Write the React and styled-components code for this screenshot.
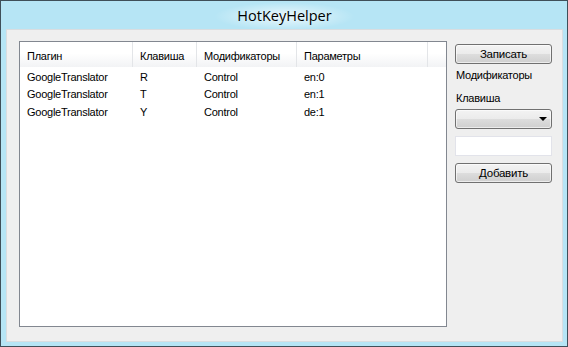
import React from "react";
import styled, { createGlobalStyle } from "styled-components";

const Global = createGlobalStyle`
  html, body { margin: 0; padding: 0; background: #6fa7c9; }
  body { font-family: "Liberation Sans", Arial, sans-serif; }
  * { box-sizing: border-box; }
`;

const Window = styled.div`
  width: 568px;
  height: 347px;
  border: 1px solid #3f4f59;
  background: #b6e5f5;
  display: flex;
  flex-direction: column;
  padding: 0 4px 4px 5px;
`;

const TitleBar = styled.div`
  height: 28px;
  display: flex;
  align-items: center;
  justify-content: center;
  background: radial-gradient(ellipse 70px 14px at 50% 55%, rgba(255,255,255,0.75), rgba(255,255,255,0) 100%);
  font-family: "Segoe UI", "Open Sans", "Liberation Sans", sans-serif;
  font-size: 14.5px;
  color: #000;
  padding-top: 1px;
`;

const Client = styled.div`
  flex: 1;
  background: #efefef;
  border: 1px solid #d9dde0;
  display: flex;
  padding: 11px 9px 14px 12px;
  gap: 8px;
  font-size: 11px;
  letter-spacing: -0.25px;
  color: #000;
`;

const ListView = styled.div`
  width: 428px;
  height: 286px;
  border: 1px solid #828790;
  background: #fff;
  display: flex;
  flex-direction: column;
`;

const Header = styled.div`
  display: flex;
  height: 25px;
  margin-bottom: 1px;
  background: linear-gradient(#ffffff 0%, #ffffff 45%, #f2f3f5 100%);
`;

const HeadCell = styled.div`
  width: ${(p) => p.$w}px;
  flex: ${(p) => (p.$fill ? 1 : "none")};
  border-right: ${(p) => (p.$fill ? "none" : "1px solid #e3e5e8")};
  padding-left: 7px;
  display: flex;
  align-items: center;
  padding-top: 2px;
  white-space: nowrap;
`;

const Row = styled.div`
  display: flex;
  height: 17.5px;
  align-items: center;
`;

const Cell = styled.div`
  width: ${(p) => p.$w}px;
  padding-left: 7px;
  white-space: nowrap;
`;

const Side = styled.div`
  width: 97px;
  display: flex;
  flex-direction: column;
  padding-top: 3px;
`;

const Button = styled.div`
  height: 20px;
  border: 1px solid #707070;
  border-radius: 3px;
  background: linear-gradient(#f3f3f3 0%, #ebebeb 50%, #dddddd 51%, #cfcfcf 100%);
  box-shadow: inset 0 0 0 1px rgba(255,255,255,0.6);
  display: flex;
  align-items: center;
  justify-content: center;
  font-size: 11.5px;
`;

const Label = styled.div`
  height: ${(p) => p.$h}px;
  display: flex;
  align-items: center;
  padding-left: 1px;
`;

const Combo = styled.div`
  height: 20px;
  border: 1px solid #707070;
  border-radius: 3px;
  background: linear-gradient(#f3f3f3 0%, #ebebeb 50%, #dddddd 51%, #cfcfcf 100%);
  box-shadow: inset 0 0 0 1px rgba(255,255,255,0.6);
  display: flex;
  align-items: center;
  justify-content: flex-end;
  padding-right: 4px;
`;

const Arrow = styled.div`
  width: 0;
  height: 0;
  border-left: 4px solid transparent;
  border-right: 4px solid transparent;
  border-top: 4px solid #000;
`;

const TextBox = styled.div`
  height: 20px;
  margin-top: 7px;
  border: 1px solid #e2e3ea;
  background: #fff;
`;

const AddButton = styled(Button)`
  margin-top: 7px;
`;

const cols = [113, 64, 100, 131];
const headers = ["Плагин", "Клавиша", "Модификаторы", "Параметры"];
const rows = [
  ["GoogleTranslator", "R", "Control", "en:0"],
  ["GoogleTranslator", "T", "Control", "en:1"],
  ["GoogleTranslator", "Y", "Control", "de:1"],
];

export default function App() {
  return (
    <>
      <Global />
      <Window>
        <TitleBar>HotKeyHelper</TitleBar>
        <Client>
          <ListView>
            <Header>
              {headers.map((h, i) => (
                <HeadCell key={h} $w={cols[i]}>{h}</HeadCell>
              ))}
              <HeadCell $fill />
            </Header>
            {rows.map((r, ri) => (
              <Row key={ri}>
                {r.map((c, ci) => (
                  <Cell key={ci} $w={cols[ci]}>{c}</Cell>
                ))}
              </Row>
            ))}
          </ListView>
          <Side>
            <Button>Записать</Button>
            <Label $h={22}>Модификаторы</Label>
            <Label $h={23}>Клавиша</Label>
            <Combo><Arrow /></Combo>
            <TextBox />
            <AddButton>Добавить</AddButton>
          </Side>
        </Client>
      </Window>
    </>
  );
}
